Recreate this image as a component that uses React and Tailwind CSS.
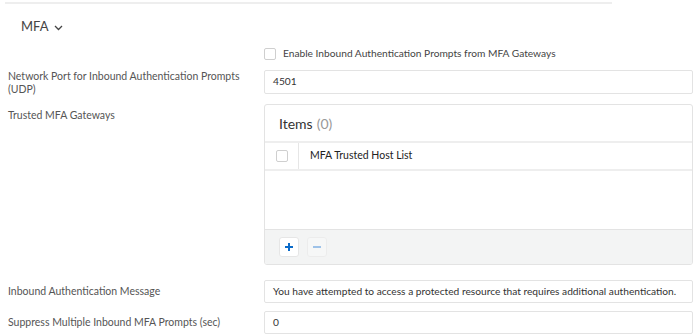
import React from "react";

const Field = ({ label, children, className = "", labelPad = "pt-[0px]" }) => (
    <div className={"flex items-start " + className}>
        <div className={"w-[256px] pr-2 text-[10.5px] leading-[13px] text-[#555] " + labelPad}>{label}</div>
        <div className="flex-1 min-w-0 pr-[7px]">{children}</div>
    </div>
);

const Input = ({ value, h = "h-[24px]" }) => (
    <div className={h + " border border-[#e3e3e3] rounded-[2px] bg-white px-2 flex items-center text-[10.2px] text-[#333] whitespace-nowrap overflow-hidden"}>
        {value}
    </div>
);

const App = () => {
    return (
        <div className="w-[700px] h-[335px] bg-white overflow-hidden font-['Lato','Open_Sans',sans-serif] pl-[8px]">
            <div className="h-[2px] w-[607px] bg-[#eeeeee] mt-[2px] -ml-[3px]"></div>

            <div className="flex items-center gap-[6px] pl-[13px] mt-[15px] h-[16px] text-[13px] text-[#444]">
                <span>MFA</span>
                <svg width="9" height="6" viewBox="0 0 9 6" className="mt-[1px]">
                    <path d="M1 1l3.5 3.5L8 1" fill="none" stroke="#444" strokeWidth="1.3" />
                </svg>
            </div>

            <div className="flex items-center pl-[256px] mt-[12px] h-[14px]">
                <div className="w-[12px] h-[12px] border border-[#cfcfcf] rounded-[2px] bg-white"></div>
                <span className="ml-[7px] text-[10.2px] text-[#444]">Enable Inbound Authentication Prompts from MFA Gateways</span>
            </div>

            <Field label={<>Network Port for Inbound Authentication Prompts<br />(UDP)</>} className="mt-[9px]" labelPad="pt-[0px]">
                <Input value="4501" />
            </Field>

            <Field label="Trusted MFA Gateways" className="mt-[8px]" labelPad="pt-[5px]">
                <div className="h-[161px] border border-[#e3e3e3] rounded-[3px] flex flex-col overflow-hidden">
                    <div className="h-[38px] border-b-2 border-[#eeeeee] flex items-center pl-[14px] text-[14px] text-[#333]">
                        Items<span className="ml-[4px] text-[#999]">(0)</span>
                    </div>
                    <div className="h-[28px] border-b-2 border-[#eeeeee] flex">
                        <div className="w-[34px] border-r border-[#e6e6e6] flex items-center justify-center">
                            <div className="w-[12px] h-[12px] border border-[#cfcfcf] rounded-[2px]"></div>
                        </div>
                        <div className="flex items-center pl-[11px] text-[10.5px] text-[#222]">MFA Trusted Host List</div>
                    </div>
                    <div className="flex-1"></div>
                    <div className="h-[35px] bg-[#f3f4f4] border-t border-[#e3e3e3] flex items-center pl-[14px] gap-[8px]">
                        <div className="w-[20px] h-[20px] bg-white border border-[#e6e6e6] rounded-[3px] flex items-center justify-center">
                            <svg width="10" height="10" viewBox="0 0 10 10">
                                <path d="M5 1v8M1 5h8" stroke="#0b6bc9" strokeWidth="2" />
                            </svg>
                        </div>
                        <div className="w-[20px] h-[20px] bg-[#f6f7f7] border border-[#ececec] rounded-[3px] flex items-center justify-center">
                            <svg width="10" height="10" viewBox="0 0 10 10">
                                <path d="M1 5h8" stroke="#9ec2e8" strokeWidth="2" />
                            </svg>
                        </div>
                    </div>
                </div>
            </Field>

            <Field label="Inbound Authentication Message" className="mt-[15px]" labelPad="pt-[5px]">
                <Input value="You have attempted to access a protected resource that requires additional authentication." h="h-[23px]" />
            </Field>

            <Field label="Suppress Multiple Inbound MFA Prompts (sec)" className="mt-[8px]" labelPad="pt-[5px]">
                <Input value="0" h="h-[23px]" />
            </Field>
        </div>
    );
};

export default App;
